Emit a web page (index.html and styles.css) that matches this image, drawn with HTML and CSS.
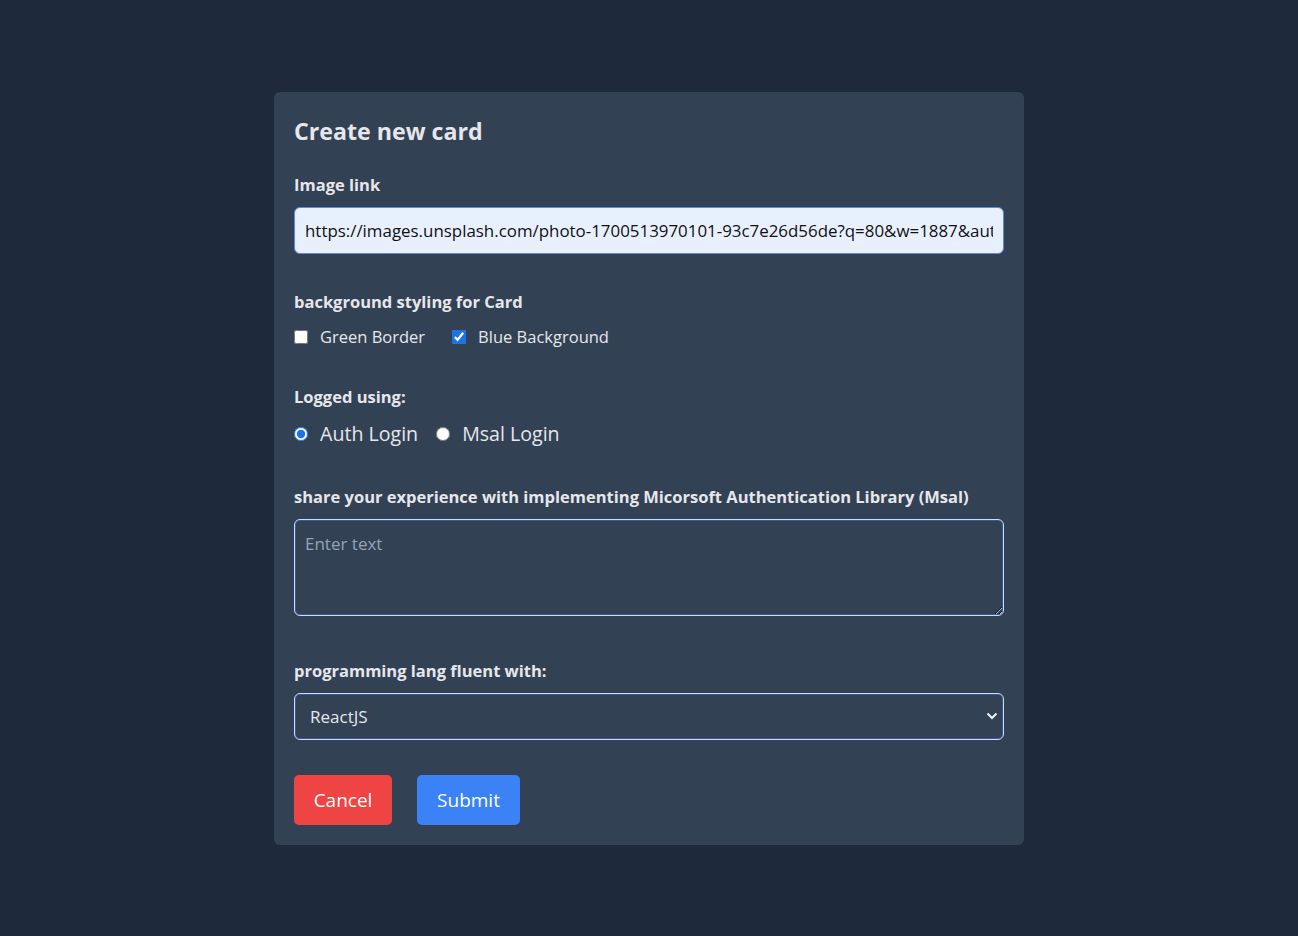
FILE: index.html
```html
<!DOCTYPE html>
<html lang="en">
<head>
<meta charset="utf-8">
<title>Create new card</title>
<link rel="stylesheet" href="styles.css">
</head>
<body>
<main class="page">
  <form class="card">
    <h1 class="title">Create new card</h1>

    <div class="field">
      <label class="label" for="img">Image link</label>
      <input id="img" class="text-input" type="text" value="https://images.unsplash.com/photo-1700513970101-93c7e26d56de?q=80&amp;w=1887&amp;auto=format&amp;fit=crop">
    </div>

    <div class="field">
      <span class="label">background styling for Card</span>
      <div class="choices checks">
        <label class="choice"><input type="checkbox"> Green Border</label>
        <label class="choice"><input type="checkbox" checked> Blue Background</label>
      </div>
    </div>

    <div class="field">
      <span class="label">Logged using:</span>
      <div class="choices radios">
        <label class="choice"><input type="radio" name="login" checked> Auth Login</label>
        <label class="choice"><input type="radio" name="login"> Msal Login</label>
      </div>
    </div>

    <div class="field">
      <label class="label" for="exp">share your experience with implementing Micorsoft Authentication Library (Msal)</label>
      <textarea id="exp" class="textarea" placeholder="Enter text"></textarea>
    </div>

    <div class="field">
      <label class="label" for="lang">programming lang fluent with:</label>
      <div class="select-wrap">
        <select id="lang" class="select">
          <option>ReactJS</option>
          <option>Angular</option>
          <option>Vue</option>
        </select>
        <svg class="chev" width="12" height="12" viewBox="0 0 12 12"><path d="M1.5 3.5 L6 8 L10.5 3.5" fill="none" stroke="#eef2f7" stroke-width="2"/></svg>
      </div>
    </div>

    <div class="actions">
      <button type="button" class="btn btn-cancel">Cancel</button>
      <button type="button" class="btn btn-submit">Submit</button>
    </div>
  </form>
</main>
</body>
</html>
```
FILE: styles.css
```css
* { box-sizing: border-box; }
html, body { margin: 0; padding: 0; }
body {
  background: #1e293b;
  font-family: "Open Sans", "Noto Sans", sans-serif;
  color: #e2e8f0;
  min-height: 936px;
}
.page {
  display: flex;
  justify-content: center;
  padding-top: 92px;
}
.card {
  width: 750px;
  background: #334155;
  border-radius: 6px;
  padding: 20px;
  display: flex;
  flex-direction: column;
}
.title {
  margin: 0;
  font-size: 23.2px;
  font-weight: 700;
  line-height: 38px;
  color: #e5e7eb;
}
.field {
  display: flex;
  flex-direction: column;
}
.label {
  font-size: 16.5px;
  font-weight: 700;
  color: #e5e7eb;
  line-height: 22px;
}
.field:nth-of-type(1) { margin-top: 24px; }
.field:nth-of-type(1) .label { margin-bottom: 11px; }
.text-input {
  height: 47px;
  border: 1px solid #5b8bd9;
  border-radius: 6px;
  background: #e8f0fe;
  color: #111;
  font-family: inherit;
  font-size: 16.9px;
  padding: 0 10px;
}
.field:nth-of-type(2) { margin-top: 37px; }
.choices {
  display: flex;
  align-items: center;
}
.checks { gap: 27px; margin-top: 13px; }
.choice {
  display: flex;
  align-items: center;
  color: #e5e7eb;
}
.checks .choice { font-size: 16.5px; line-height: 22px; }
.choice input { margin: 0 12px 0 0; }
.checks input { width: 14px; height: 14px; accent-color: #1a73e8; }
.field:nth-of-type(3) { margin-top: 38px; }
.radios { gap: 18px; margin-top: 13px; }
.radios .choice { font-size: 19.6px; line-height: 25px; }
.radios input { width: 14px; height: 14px; accent-color: #1a73e8; }
.field:nth-of-type(4) { margin-top: 40px; }
.field:nth-of-type(4) .label { margin-bottom: 11px; }
.textarea {
  height: 97px;
  background: #334155;
  border: 1px solid #c9dcfb;
  box-shadow: inset 0 0 0 1px rgba(59, 110, 200, 0.55);
  border-radius: 6px;
  color: #e5e7eb;
  font-family: inherit;
  font-size: 17px;
  padding: 12px 10px;
  resize: vertical;
}
.textarea::placeholder { color: #94a3b8; }
.field:nth-of-type(5) { margin-top: 44px; }
.field:nth-of-type(5) .label { margin-bottom: 11px; }
.select-wrap { position: relative; }
.select {
  width: 100%;
  height: 47px;
  appearance: none;
  background: #334155;
  border: 1px solid #c9dcfb;
  box-shadow: inset 0 0 0 1px rgba(59, 110, 200, 0.55);
  border-radius: 6px;
  color: #e5e7eb;
  font-family: inherit;
  font-size: 17px;
  padding: 0 15px;
}
.chev {
  position: absolute;
  right: 6px;
  top: 17px;
  pointer-events: none;
}
.actions {
  display: flex;
  gap: 25px;
  margin-top: 35px;
}
.btn {
  height: 50px;
  border: none;
  border-radius: 5px;
  color: #fff;
  font-family: inherit;
  font-size: 19px;
  padding: 0;
}
.btn-cancel { background: #ef4444; width: 98px; }
.btn-submit { background: #3b82f6; width: 103px; }
```
